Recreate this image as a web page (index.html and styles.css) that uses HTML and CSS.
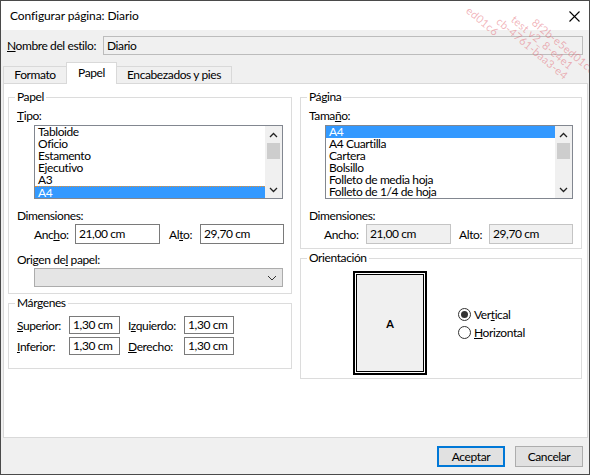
FILE: index.html
```html
<!DOCTYPE html>
<html lang="es">
<head>
<meta charset="utf-8">
<title>Configurar página: Diario</title>
<link rel="stylesheet" href="styles.css">
</head>
<body>
<div class="win">
  <div class="titlebar">
    <span class="title">Configurar página: Diario</span>
    <svg class="close" width="11" height="11" viewBox="0 0 11 11"><path d="M0.5 0.5 L10.5 10.5 M10.5 0.5 L0.5 10.5" stroke="#000" stroke-width="1.1" fill="none"/></svg>
  </div>

  <div class="stylerow">
    <span class="stylelbl"><u>N</u>ombre del estilo:</span>
    <div class="field-ro">Diario</div>
  </div>

  <div class="tabs">
    <div class="tab t1">Formato</div>
    <div class="tab t2 active">Papel</div>
    <div class="tab t3">Encabezados y pies</div>
  </div>

  <div class="panel">
    <div class="col">
      <fieldset class="grp papel">
        <legend>Papel</legend>
        <div class="lbl first"><u>T</u>ipo:</div>
        <div class="listbox">
          <div class="items">
            <div class="item">Tabloide</div>
            <div class="item">Oficio</div>
            <div class="item">Estamento</div>
            <div class="item">Ejecutivo</div>
            <div class="item">A3</div>
            <div class="item sel focus">A4</div>
          </div>
          <div class="sb">
            <div class="sbbtn"><svg width="9" height="6" viewBox="0 0 9 6"><polyline points="1,5 4.5,1.5 8,5" fill="none" stroke="#222" stroke-width="1.3"/></svg></div>
            <div class="thumb"></div>
            <div class="sbfill"></div>
            <div class="sbbtn"><svg width="9" height="6" viewBox="0 0 9 6"><polyline points="1,1 4.5,4.5 8,1" fill="none" stroke="#222" stroke-width="1.3"/></svg></div>
          </div>
        </div>
        <div class="lbl gap10">Dimensiones:</div>
        <div class="dimrow">
          <span class="dl-ancho">Anc<u>h</u>o:</span>
          <div class="tb w85">21,00 cm</div>
          <span class="dl-alto">Al<u>t</u>o:</span>
          <div class="tb w84">29,70 cm</div>
        </div>
        <div class="lbl gap9">Origen de<u>l</u> papel:</div>
        <div class="combo">
          <svg width="10" height="6" viewBox="0 0 10 6"><polyline points="1,1 5,5 9,1" fill="none" stroke="#333" stroke-width="1"/></svg>
        </div>
      </fieldset>

      <fieldset class="grp margenes">
        <legend>Márgenes</legend>
        <div class="mrow r1">
          <span class="ml1"><u>S</u>uperior:</span>
          <div class="tb mw1">1,30 cm</div>
          <span class="ml2">I<u>z</u>quierdo:</span>
          <div class="tb mw2">1,30 cm</div>
        </div>
        <div class="mrow r2">
          <span class="ml1"><u>I</u>nferior:</span>
          <div class="tb mw1">1,30 cm</div>
          <span class="ml2"><u>D</u>erecho:</span>
          <div class="tb mw2">1,30 cm</div>
        </div>
      </fieldset>
    </div>

    <div class="col">
      <fieldset class="grp pagina">
        <legend>Página</legend>
        <div class="lbl first">Tama<u>ñ</u>o:</div>
        <div class="listbox rlist">
          <div class="items">
            <div class="item sel">A4</div>
            <div class="item">A4 Cuartilla</div>
            <div class="item">Cartera</div>
            <div class="item">Bolsillo</div>
            <div class="item">Folleto de media hoja</div>
            <div class="item">Folleto de 1/4 de hoja</div>
          </div>
          <div class="sb">
            <div class="sbbtn"><svg width="9" height="6" viewBox="0 0 9 6"><polyline points="1,5 4.5,1.5 8,5" fill="none" stroke="#222" stroke-width="1.3"/></svg></div>
            <div class="thumb"></div>
            <div class="sbfill"></div>
            <div class="sbbtn"><svg width="9" height="6" viewBox="0 0 9 6"><polyline points="1,1 4.5,4.5 8,1" fill="none" stroke="#222" stroke-width="1.3"/></svg></div>
          </div>
        </div>
        <div class="lbl gap10">Dimensiones:</div>
        <div class="dimrow rdim">
          <span class="dl-ancho r">Ancho:</span>
          <div class="tb dis w85">21,00 cm</div>
          <span class="dl-alto r">Alto:</span>
          <div class="tb dis w84">29,70 cm</div>
        </div>
      </fieldset>

      <fieldset class="grp orient">
        <legend>Orientación</legend>
        <div class="orow">
          <div class="sheet"><div class="sheet-in">A</div></div>
          <div class="radios">
            <div class="radio"><span class="rb on"></span><span>Ver<u>t</u>ical</span></div>
            <div class="radio"><span class="rb"></span><span><u>H</u>orizontal</span></div>
          </div>
        </div>
      </fieldset>
    </div>
  </div>

  <div class="footer">
    <button class="btn primary">Aceptar</button>
    <button class="btn">Cancelar</button>
  </div>

  <div class="wm">
    <div class="wl l1">8f2b-e5ed01c6</div>
    <div class="wl l2">test v2_8-e4e1</div>
    <div class="wl l3">cb-4761-baa3-e4</div>
    <div class="wl l4">ed01c6</div>
  </div>
</div>
</body>
</html>
```

FILE: styles.css
```css
* { box-sizing: border-box; }
html, body { margin: 0; padding: 0; }
body {
  width: 590px;
  height: 475px;
  overflow: hidden;
  font-family: "Lato", "Noto Sans", sans-serif;
  font-size: 12px;
  letter-spacing: -0.4px;
  color: #000;
  background: #fff;
  white-space: nowrap;
}
u { text-decoration: underline; text-underline-offset: 1px; }

.win {
  position: relative;
  width: 590px;
  height: 475px;
  border: 1px solid #4a4a4a;
  background: #f0f0f0;
  display: flex;
  flex-direction: column;
  overflow: hidden;
}

.titlebar {
  height: 29px;
  flex: none;
  background: #fff;
  display: flex;
  align-items: center;
  justify-content: space-between;
  padding: 0 9px 0 9px;
}
.title { line-height: 16px; font-size: 12px; letter-spacing: -0.1px; }
.close { display: block; margin-top: 1px; }

.stylerow {
  height: 32px;
  flex: none;
  display: flex;
  align-items: flex-start;
  padding: 6px 6px 0 6px;
}
.stylelbl { width: 96px; line-height: 19px; flex: none; }
.field-ro {
  flex: 1;
  height: 19px;
  line-height: 17px;
  border: 1px solid #bcbcbc;
  background: #f0f0f0;
  padding-left: 3px;
}

.tabs {
  height: 21px;
  flex: none;
  display: flex;
  align-items: flex-end;
  padding-left: 2px;
  position: relative;
  z-index: 1;
}
.tab {
  height: 17px;
  line-height: 16px;
  border: 1px solid #d9d9d9;
  border-bottom: 0;
  background: #f0f0f0;
  text-align: center;
}
.tab + .tab { margin-left: -1px; }
.t1 { width: 64px; }
.t2 { width: 51px; }
.t3 { width: 116px; }
.tab.active {
  height: 22px;
  line-height: 19px;
  background: #fff;
  margin-bottom: -1px;
  position: relative;
  z-index: 2;
}

.panel {
  height: 355px;
  flex: none;
  margin: 0 1px 0 2px;
  background: #fff;
  border: 1px solid #d9d9d9;
  padding: 6px 0 0 4px;
  display: grid;
  grid-template-columns: 284px 282px;
  column-gap: 8px;
  align-items: start;
}
.col { display: flex; flex-direction: column; }

.grp {
  margin: 0;
  border: 1px solid #dcdcdc;
  padding: 0 8px;
  min-width: 0;
}
.grp legend {
  padding: 0 2px;
  margin-left: -2px;
  line-height: 14px;
  font-size: 12px;
}
.margenes, .orient { margin-top: 2px; }

.lbl { line-height: 14px; }
.lbl.first { margin-top: 5px; }
.lbl.gap10 { margin-top: 10px; }
.lbl.gap9 { margin-top: 9px; }

.listbox {
  margin: 2px 0 0 17px;
  height: 74px;
  border: 1px solid #828790;
  background: #fff;
  display: flex;
}
.rlist { margin-left: 16px; }
.items { flex: 1; min-width: 0; }
.item {
  height: 12px;
  line-height: 12px;
  padding-left: 3px;
  white-space: nowrap;
}
.item.sel { background: #3399ff; color: #fff; }
.item.focus { border-top: 1px dotted #e8902e; line-height: 11px; }

.sb {
  width: 17px;
  flex: none;
  background: #f0f0f0;
  display: flex;
  flex-direction: column;
  align-items: center;
}
.sbbtn {
  height: 17px;
  width: 17px;
  display: flex;
  align-items: center;
  justify-content: center;
}
.sbbtn svg { display: block; }
.thumb { width: 13px; height: 16px; background: #cdcdcd; }
.sbfill { flex: 1; }

.dimrow {
  margin-top: 1px;
  height: 20px;
  display: flex;
  align-items: center;
  padding-left: 17px;
}
.rdim { padding-left: 15px; }
.dl-ancho { width: 41px; flex: none; }
.dl-ancho.r { width: 42px; }
.dl-alto { width: 31px; margin-left: 9px; flex: none; }
.dl-alto.r { width: 30px; margin-left: 8px; }

.tb {
  height: 20px;
  line-height: 18px;
  border: 1px solid #7a7a7a;
  background: #fff;
  padding-left: 3px;
  flex: none;
  white-space: nowrap;
}
.tb.dis { background: #f0f0f0; border-color: #c4c4c4; }
.w85 { width: 85px; }
.w84 { width: 84px; }

.papel { padding-bottom: 6px; }
.pagina { padding-bottom: 4px; }

.combo {
  margin: 1px 0 0 17px;
  height: 19px;
  border: 1px solid #acacac;
  background: #e5e5e5;
  display: flex;
  align-items: center;
  justify-content: flex-end;
  padding-right: 5px;
}
.combo svg { display: block; }

.margenes { padding-bottom: 13px; }
.mrow {
  height: 18px;
  display: flex;
  align-items: center;
}
.mrow.r1 { margin-top: 6px; }
.mrow.r2 { margin-top: 3px; }
.mrow .tb { height: 18px; line-height: 16px; }
.ml1 { width: 52px; flex: none; }
.mw1 { width: 51px; }
.ml2 { width: 56px; margin-left: 8px; flex: none; }
.mw2 { width: 50px; }

.orient { padding-bottom: 3px; }
.orow {
  margin-top: 6px;
  display: flex;
  align-items: center;
}
.sheet {
  margin-left: 44px;
  width: 74px;
  height: 104px;
  border: 2px solid #000;
  padding: 1px;
  background: #fff;
  flex: none;
}
.sheet-in {
  width: 100%;
  height: 100%;
  border: 1px solid #000;
  background: #f0f0f0;
  display: flex;
  align-items: center;
  justify-content: center;
  font-weight: bold;
  font-size: 11px;
  letter-spacing: 0;
}
.radios { margin-left: 31px; display: flex; flex-direction: column; }
.radio { height: 18px; display: flex; align-items: center; }
.rb {
  width: 13px;
  height: 13px;
  border: 1px solid #333;
  border-radius: 50%;
  background: #fff;
  margin-right: 3px;
  display: flex;
  align-items: center;
  justify-content: center;
  flex: none;
}
.rb.on::after {
  content: "";
  width: 7px;
  height: 7px;
  border-radius: 50%;
  background: #333;
}

.footer {
  flex: 1;
  display: flex;
  align-items: center;
  justify-content: flex-end;
  gap: 10px;
  padding: 0 6px 0 0;
}
.btn {
  width: 68px;
  height: 21px;
  border: 1px solid #adadad;
  background: #e1e1e1;
  font: inherit;
  letter-spacing: inherit;
  color: #000;
  padding: 0;
  margin: 0;
}
.btn.primary { border: 2px solid #0078d7; }

.wm {
  position: absolute;
  left: 492px;
  top: -22px;
  transform: rotate(40deg);
  transform-origin: 0 0;
  color: rgba(225, 90, 105, 0.45);
  font-size: 11px;
  line-height: 11px;
  letter-spacing: 0.3px;
  pointer-events: none;
  white-space: nowrap;
}
.wl { height: 11px; }
.l1 { padding-left: 58px; }
.l2 { padding-left: 40px; }
.l3 { padding-left: 30px; }
.l4 { padding-left: 0; }
```
